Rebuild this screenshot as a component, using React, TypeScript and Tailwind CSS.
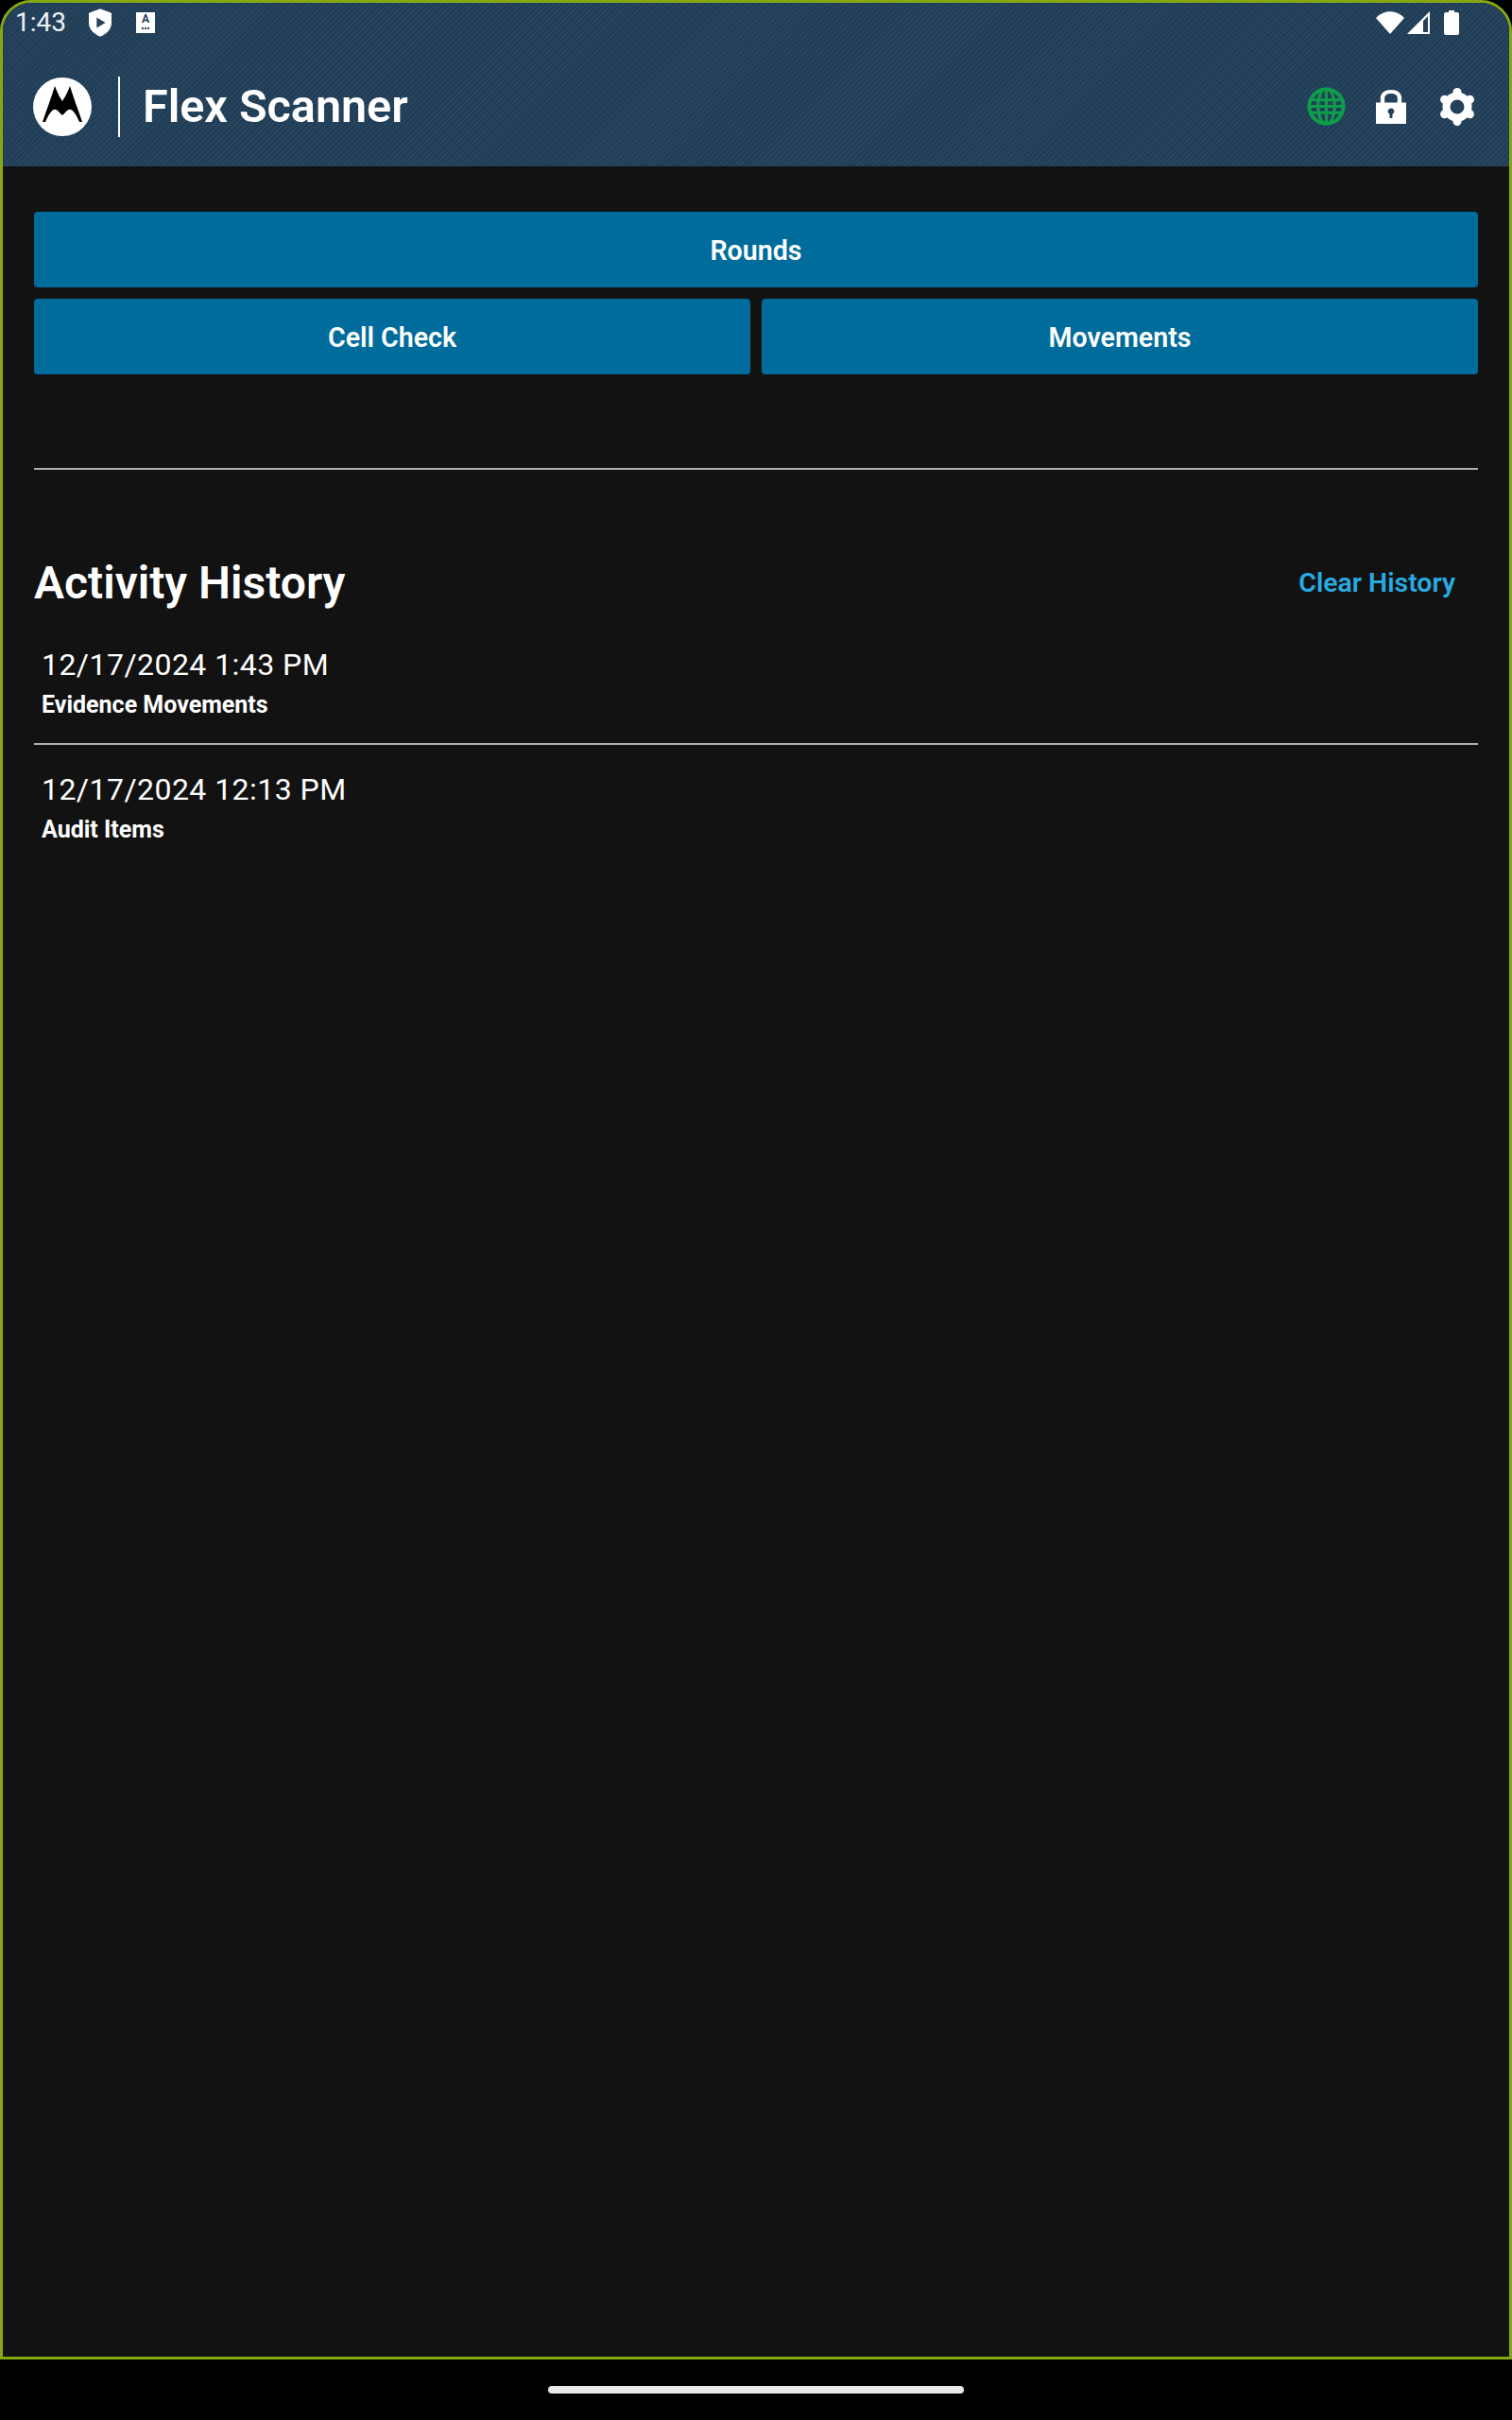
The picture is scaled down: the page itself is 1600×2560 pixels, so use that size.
const history = [
  { date: '12/17/2024 1:43 PM', label: 'Evidence Movements' },
  { date: '12/17/2024 12:13 PM', label: 'Audit Items' },
];

const ActionButton = ({ label }: { label: string }) => (
  <button className="h-20 flex-1 rounded-[4px] bg-[#006c9b] pt-[2px] text-[28.6px] font-semibold text-white">{label}</button>
);

const MotoLogo = () => (
  <svg width="62" height="62" viewBox="0 0 62 62">
    <circle cx="31" cy="31" r="31" fill="#fff" />
    <path d="M10 47 C14 35 19 22 23 9 C26 17 29 22 31 25 C33 22 36 17 39 9 C43 22 48 35 52 47 L49 47 C46 40 43 35 40 34 C36 33 34 38 31 40 C28 38 26 33 22 34 C19 35 16 40 13 47 Z" fill="#000" />
  </svg>
);

const Gear = () => (
  <svg width="38" height="40" viewBox="2 0 36 40" className="ml-[35px]">
    <circle cx="20" cy="20" r="11.5" fill="none" stroke="#fff" strokeWidth="8" />
    <g fill="#fff">
      <circle cx="20" cy="4.500" r="4.500" />
      <circle cx="20" cy="35.500" r="4.500" />
      <circle cx="6.600" cy="12.250" r="4.500" />
      <circle cx="33.400" cy="12.250" r="4.500" />
      <circle cx="6.600" cy="27.750" r="4.500" />
      <circle cx="33.400" cy="27.750" r="4.500" />
    </g>
  </svg>
);

const Header = () => (
  <header className="h-[173px] shrink-0 rounded-t-[30px] bg-[#24405c] bg-[repeating-linear-gradient(135deg,#27455f_0px,#27455f_2px,#213c55_2px,#213c55_4px)]">
    <div className="flex h-[42px] items-center pl-[13px] pr-[53px]">
      <span className="w-[78px] text-[28px] text-[#eef2f5]">1:43</span>
      <svg width="24" height="30" viewBox="0 0 26 32" className="mr-[26px]">
        <path d="M13 0 L26 5 V16 C26 24 20 29 13 32 C6 29 0 24 0 16 V5 Z" fill="#fff" />
        <path d="M9 10 L19 16 L9 22 Z" fill="#24405c" />
      </svg>
      <div className="flex h-[22px] w-[20px] flex-col items-center bg-white pt-[1px] text-[#24405c]">
        <span className="text-[12px] leading-[13px] font-bold">A</span>
        <span className="mt-[2px] flex gap-[1px]">
          <i className="size-[2px] bg-[#24405c]" />
          <i className="size-[2px] bg-[#24405c]" />
          <i className="size-[2px] bg-[#24405c]" />
        </span>
      </div>
      <div className="ml-auto flex items-center">
        <svg width="30" height="24" viewBox="0 0 30 24"><path d="M15 24 L0 7 C8 -2 22 -2 30 7 Z" fill="#fff" /></svg>
        <svg width="24" height="24" viewBox="0 0 24 24" className="ml-[3px]">
          <path d="M0 24 L24 0 V24 Z M17 22 H22 V5 L17 10 Z" fill="#fff" fillRule="evenodd" />
        </svg>
        <svg width="16" height="26" viewBox="0 0 16 26" className="ml-[15px]">
          <path d="M5 0 H11 V2 H14 C15 2 16 3 16 4 V24 C16 25 15 26 14 26 H2 C1 26 0 25 0 24 V4 C0 3 1 2 2 2 H5 Z" fill="#fff" />
        </svg>
      </div>
    </div>
    <div className="mt-[35px] flex h-[65px] items-center pl-[32px] pr-[36px]">
      <MotoLogo />
      <div className="ml-[28px] h-[64px] w-[2px] bg-white" />
      <h1 className="ml-[24px] pt-[2px] text-[48.5px] font-semibold text-white">Flex Scanner</h1>
      <div className="ml-auto flex items-center">
        <svg width="41" height="41" viewBox="0 0 42 42" fill="none" stroke="#0f9d4a" strokeWidth="3">
          <circle cx="21" cy="21" r="18.5" strokeWidth="4" />
          <ellipse cx="21" cy="21" rx="9" ry="19" />
          <path d="M21 2 V40 M4 14 H38 M2 21 H40 M4 28 H38" />
        </svg>
        <svg width="32" height="37" viewBox="0 0 33 38" className="ml-[32px]">
          <path d="M5 16 V10 C5 4 10 1 16.5 1 C23 1 28 4 28 10 V16 H23.5 V10 C23.5 7 21 5 16.5 5 C12 5 9.500 7 9.500 10 V16 Z" fill="#fff" />
          <path d="M0 15 H33 V38 H0 Z M16.500 21 C14.500 21 13 22.500 13 24.500 C13 26 14 27 15 27.500 V32 H18 V27.500 C19 27 20 26 20 24.500 C20 22.500 18.500 21 16.500 21 Z" fill="#fff" fillRule="evenodd" />
        </svg>
        <Gear />
      </div>
    </div>
  </header>
);

export default function App() {
  return (
    <div className="flex h-[2560px] w-[1600px] flex-col bg-black font-['Roboto',sans-serif]">
      <div className="flex h-[2496px] shrink-0 flex-col rounded-t-[33px] border-[3px] border-[#86a812] bg-[#121212]">
        <Header />
        <main className="flex flex-col px-[33px] pt-[48px]">
          <div className="flex flex-col gap-3">
            <div className="flex"><ActionButton label="Rounds" /></div>
            <div className="flex gap-3">
              <ActionButton label="Cell Check" />
              <ActionButton label="Movements" />
            </div>
          </div>
          <div className="mt-[99px] h-[2px] bg-[#b0b0b0]" />
          <div className="mt-[80px] flex items-center justify-between pr-[24px]">
            <h2 className="text-[48px] font-semibold leading-[80px] text-white">Activity History</h2>
            <span className="text-[28.4px] font-semibold text-[#29abe2]">Clear History</span>
          </div>
          <ul className="mt-[21px] flex flex-col">
            {history.map((item, idx) => (
              <li key={item.date} className={idx === 0 ? 'border-b-2 border-[#b0b0b0] px-2 pb-[24px] pt-[4px]' : 'px-2 pt-[26px]'}>
                <div className="text-[32px] leading-[42px] tracking-[0.45px] text-white">{item.date}</div>
                <div className="mt-[6px] text-[25px] font-bold leading-[32px] text-white">{item.label}</div>
              </li>
            ))}
          </ul>
        </main>
      </div>
      <div className="flex flex-1 items-center justify-center">
        <div className="h-2 w-[440px] rounded-full bg-[#e8e8e8]" />
      </div>
    </div>
  );
}
